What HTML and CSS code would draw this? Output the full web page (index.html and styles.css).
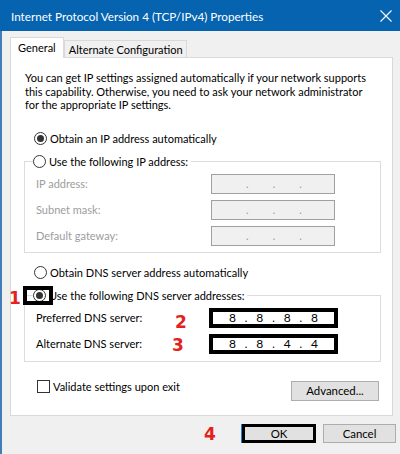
FILE: index.html
```html
<!DOCTYPE html>
<html>
  <head>
    <meta charset="utf-8">
    <link rel="stylesheet" href="styles.css">
  </head>
  <body>
    <div class="titlebar">
      <span class="title">Internet Protocol Version 4 (TCP/IPv4) Properties</span>
      <svg class="close" width="12" height="12" viewBox="0 0 12 12">
        <path d="M0.5 0.5 L11.5 11.5 M11.5 0.5 L0.5 11.5" stroke="#fff" stroke-width="1.1" fill="none"/>
      </svg>
    </div>

    <div class="client">
      <div class="tabs">
        <div class="tab active">General</div>
        <div class="tab">Alternate Configuration</div>
      </div>

      <div class="panel">
        <p class="desc">
          You can get IP settings assigned automatically if your network supports<br>
          this capability. Otherwise, you need to ask your network administrator<br>
          for the appropriate IP settings.
        </p>

        <div class="option first">
          <span class="radio checked"></span>
          <span>Obtain an IP address automatically</span>
        </div>

        <fieldset class="group ip">
          <legend class="option">
            <span class="radio"></span>
            <span>Use the following IP address:</span>
          </legend>
          <div class="row">
            <span class="label disabled">IP address:</span>
            <span class="ipbox disabled"><i>.</i><i>.</i><i>.</i></span>
          </div>
          <div class="row">
            <span class="label disabled">Subnet mask:</span>
            <span class="ipbox disabled"><i>.</i><i>.</i><i>.</i></span>
          </div>
          <div class="row">
            <span class="label disabled">Default gateway:</span>
            <span class="ipbox disabled"><i>.</i><i>.</i><i>.</i></span>
          </div>
        </fieldset>

        <div class="option dns-auto">
          <span class="radio"></span>
          <span>Obtain DNS server address automatically</span>
        </div>

        <fieldset class="group dns">
          <legend class="option">
            <span class="radio checked"></span>
            <span>Use the following DNS server addresses:</span>
          </legend>
          <div class="row">
            <span class="label">Preferred DNS server:</span>
            <span class="ipbox marked-box"><b>8</b><i>.</i><b>8</b><i>.</i><b>8</b><i>.</i><b>8</b></span>
          </div>
          <div class="row second">
            <span class="label">Alternate DNS server:</span>
            <span class="ipbox marked-box"><b>8</b><i>.</i><b>8</b><i>.</i><b>4</b><i>.</i><b>4</b></span>
          </div>
        </fieldset>

        <div class="footer-row">
          <div class="check-row">
            <span class="checkbox"></span>
            <span>Validate settings upon exit</span>
          </div>
          <button class="btn advanced">Advanced...</button>
        </div>
      </div>

      <div class="actions">
        <button class="btn ok">OK</button>
        <button class="btn">Cancel</button>
      </div>

      <!-- step markers drawn over the dialog -->
      <span class="mark"></span>
      <span class="step step1">1</span>
      <span class="step step2">2</span>
      <span class="step step3">3</span>
      <span class="step step4">4</span>
    </div>
  </body>
</html>
```

FILE: styles.css
```css
body {
  margin: 0;
  width: 400px;
  height: 454px;
  overflow: hidden;
  background: #f0f0f0;
  font-family: Lato, "Noto Sans", sans-serif;
  font-size: 11px;
  color: #000;
}

.titlebar {
  height: 31px;
  background: #0563b0;
  color: #fff;
  display: flex;
  align-items: center;
  justify-content: space-between;
  padding: 0 8px 0 11px;
}
.title {
  font-size: 11.7px;
  line-height: 14px;
}

.client {
  position: relative;
  height: 423px;
  border-left: 2px solid #3f7fb5;
  box-sizing: border-box;
  padding: 7px 0 0 8px;
}

.tabs {
  display: flex;
  align-items: flex-end;
  height: 19px;
}
.tab {
  border: 1px solid #d9d9d9;
  border-bottom: none;
  background: #f0f0f0;
  height: 16px;
  line-height: 17px;
  padding: 0 3px 0 4px;
}
.tab.active {
  position: relative;
  z-index: 1;
  background: #fff;
  height: 20px;
  line-height: 20px;
  margin-bottom: -1px;
  padding: 0 7px 0 7px;
}

.panel {
  width: 381px;
  height: 357px;
  background: #fff;
  border: 1px solid #d9d9d9;
}

.desc {
  margin: 13px 0 0 14px;
  line-height: 13.5px;
  white-space: nowrap;
}

.option {
  display: flex;
  align-items: center;
  height: 14px;
  line-height: 14px;
  gap: 3px;
}
.option.first {
  margin: 20px 0 0 23px;
}
.option.dns-auto {
  margin: 13px 0 0 23px;
}

.radio {
  position: relative;
  width: 11px;
  height: 11px;
  border: 1px solid #333;
  border-radius: 50%;
  background: #fff;
}
.radio.checked::after {
  content: "";
  position: absolute;
  left: 2px;
  top: 2px;
  width: 7px;
  height: 7px;
  border-radius: 50%;
  background: #333;
}

.group {
  margin: 9px 0 0 13px;
  width: 357px;
  padding: 0 0 6px 0;
  border: 1px solid #dcdcdc;
  box-sizing: border-box;
}
.group legend {
  margin-left: 8px;
  padding: 0 3px 0 0;
}
.group.dns {
  padding-bottom: 7px;
}

.row {
  display: flex;
  align-items: center;
  height: 20px;
  margin: 5px 0 0 11px;
}
.group.ip .row + .row {
  margin-top: 6px;
}
.row.second {
  margin-top: 6px;
}

.label {
  width: 175px;
}
.disabled {
  color: #9d9d9d;
}

.ipbox {
  display: flex;
  align-items: center;
  justify-content: space-around;
  width: 124px;
  height: 20px;
  box-sizing: border-box;
  border: 1px solid #a0a0a0;
  background: #f0f0f0;
  padding: 0 20px 0 22px;
}
.ipbox i {
  font-style: normal;
  font-size: 11px;
}
.ipbox.marked-box {
  margin-left: -2px;
  width: 129px;
  border: 4px solid #000;
  background: #fff;
  padding: 0 16px 0 16px;
  justify-content: space-between;
  font-size: 12px;
}
.ipbox b {
  font-weight: normal;
}

.footer-row {
  display: flex;
  justify-content: space-between;
  align-items: flex-start;
  margin: 18px 13px 0 26px;
}
.check-row {
  display: flex;
  align-items: center;
  gap: 3px;
  height: 13px;
}
.checkbox {
  width: 11px;
  height: 11px;
  border: 1px solid #333;
  background: #fff;
}

.btn {
  font-family: inherit;
  font-size: 11.4px;
  color: #000;
  background: #e1e1e1;
  border: 1px solid #adadad;
  height: 20px;
  padding: 0;
  box-sizing: border-box;
}
.advanced {
  width: 88px;
  margin-top: 1px;
}

.actions {
  display: flex;
  justify-content: flex-end;
  gap: 7px;
  margin: 8px 4px 0 0;
}
.actions .btn {
  width: 73px;
  height: 19px;
}
.actions .ok {
  width: 74px;
  border: 3px solid #000;
  box-shadow: -1px 0 0 #2b7fd0;
  line-height: 12px;
}

/* annotation overlays */
.mark {
  position: absolute;
  left: 21px;
  top: 255px;
  width: 30px;
  height: 19px;
  box-sizing: border-box;
  border: 4px solid #000;
}

.step {
  position: absolute;
  color: #e3221c;
  font-family: "DejaVu Sans", sans-serif;
  font-weight: bold;
  font-size: 17px;
  line-height: 17px;
}
.step1 { left: 7px; top: 259px; }
.step2 { left: 173px; top: 283px; }
.step3 { left: 170px; top: 306px; }
.step4 { left: 202px; top: 395px; }
```
